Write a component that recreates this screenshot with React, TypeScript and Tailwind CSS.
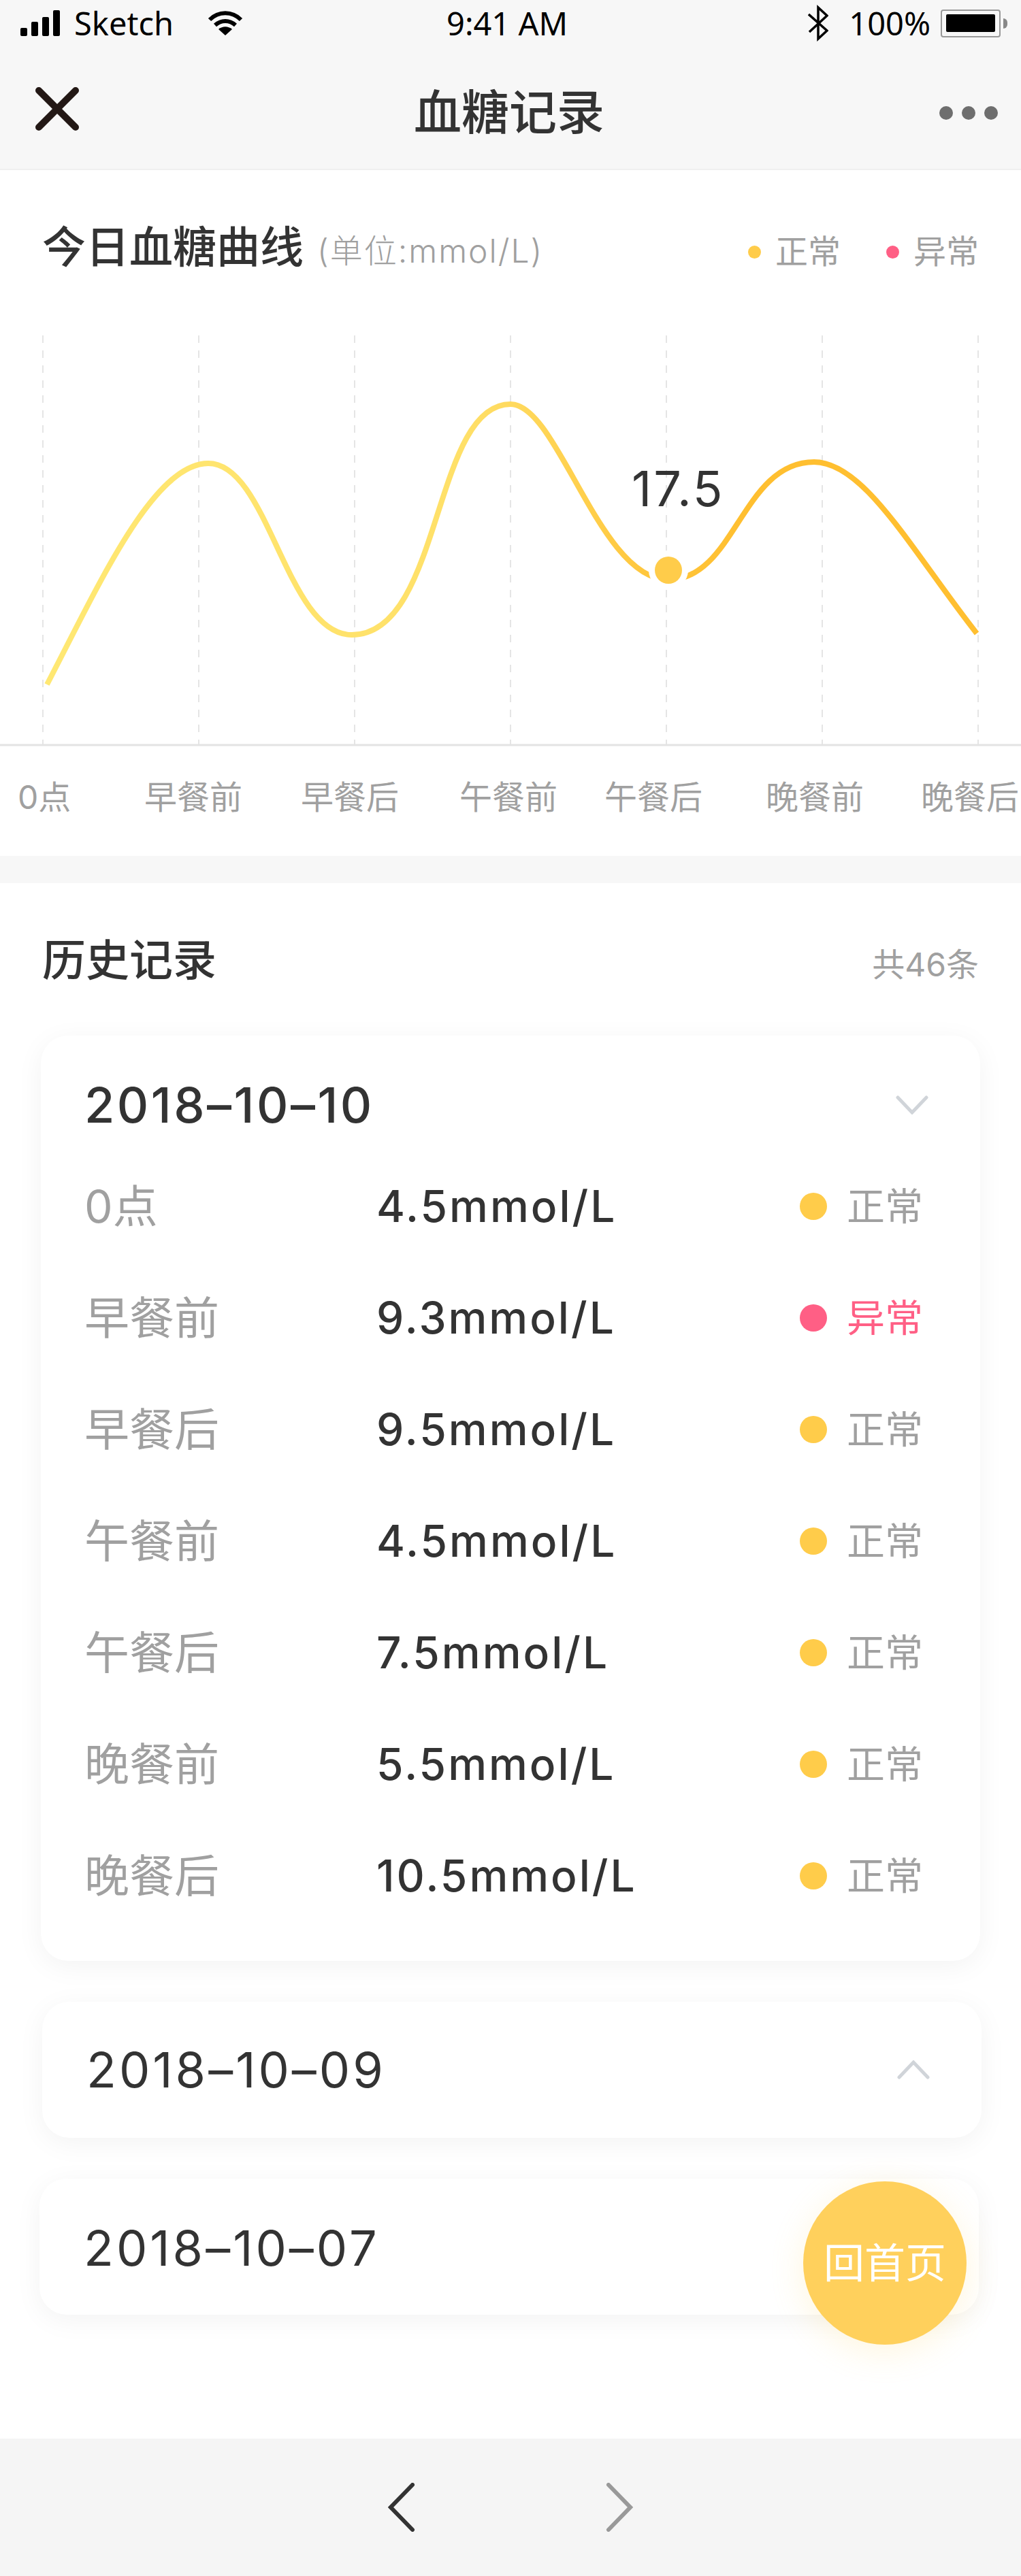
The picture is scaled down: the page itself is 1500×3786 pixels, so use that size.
import { FC } from "react";

const rows = [
  { name: "0点", value: "4.5mmol/L", ok: true },
  { name: "早餐前", value: "9.3mmol/L", ok: false },
  { name: "早餐后", value: "9.5mmol/L", ok: true },
  { name: "午餐前", value: "4.5mmol/L", ok: true },
  { name: "午餐后", value: "7.5mmol/L", ok: true },
  { name: "晚餐前", value: "5.5mmol/L", ok: true },
  { name: "晚餐后", value: "10.5mmol/L", ok: true },
];

const gridX = [63, 292, 521, 750, 979, 1208, 1437];

const StatusBar: FC = () => (
  <div className="relative flex h-[68px] items-center justify-between pl-[30px] pr-[20px] [font-family:'Noto_Sans',sans-serif] text-[47px] leading-none text-black">
    <div className="flex items-center">
      <div className="flex h-[38px] items-end gap-[6px]">
        <div className="h-[12px] w-[10px] rounded-[2px] bg-black" />
        <div className="h-[21px] w-[10px] rounded-[2px] bg-black" />
        <div className="h-[28px] w-[10px] rounded-[2px] bg-black" />
        <div className="h-[38px] w-[10px] rounded-[2px] bg-black" />
      </div>
      <span className="ml-[21px]">Sketch</span>
      <svg viewBox="0 0 52 36" className="ml-[50px] h-[36px] w-[52px]">
        <path d="M3 13 C16 0 36 0 49 13" fill="none" stroke="#000" strokeWidth="6" />
        <path d="M11 21 C20 13 32 13 41 21" fill="none" stroke="#000" strokeWidth="6" />
        <path d="M16 27 C22 22 30 22 36 27 L26 36 Z" fill="#000" />
      </svg>
    </div>
    <span className="absolute left-[656px]">9:41 AM</span>
    <div className="flex items-center">
      <svg viewBox="0 0 30 54" className="h-[54px] w-[30px]">
        <path d="M1 14 L28 38 L15 50 L15 4 L28 16 L2 40" fill="none" stroke="#000" strokeWidth="3.5" />
      </svg>
      <span className="ml-[30px]">100%</span>
      <div className="ml-[15px] flex h-[41px] w-[88px] items-center justify-center rounded-[4px] border-2 border-[#999]">
        <div className="h-[26px] w-[72px] rounded-[2px] bg-black" />
      </div>
      <div className="ml-[4px] h-[15px] w-[6px] rounded-r-full bg-[#888]" />
    </div>
  </div>
);

const NavBar: FC = () => (
  <div className="flex h-[182px] items-center justify-between border-b-2 border-[#efefef] pl-[52px] pr-[34px] pt-[16px]">
    <svg viewBox="0 0 64 64" className="-mt-[12px] h-[64px] w-[64px]">
      <path d="M5 5 L59 59 M59 5 L5 59" stroke="#231815" strokeWidth="10" strokeLinecap="round" />
    </svg>
    <span className="text-[70px] font-medium leading-none text-[#333]">血糖记录</span>
    <div className="flex gap-[13px]">
      <div className="h-[20px] w-[20px] rounded-full bg-[#6e6e6e]" />
      <div className="h-[20px] w-[20px] rounded-full bg-[#6e6e6e]" />
      <div className="h-[20px] w-[20px] rounded-full bg-[#6e6e6e]" />
    </div>
  </div>
);

const Chart: FC = () => (
  <svg viewBox="0 493 1500 604" className="block h-[604px] w-[1500px]">
    <defs>
      <linearGradient id="line" x1="69" y1="0" x2="1435" y2="0" gradientUnits="userSpaceOnUse">
        <stop offset="0" stopColor="#ffe873" />
        <stop offset="0.45" stopColor="#ffe068" />
        <stop offset="0.65" stopColor="#ffc63c" />
        <stop offset="0.75" stopColor="#ffbf30" />
        <stop offset="1" stopColor="#ffbf30" />
      </linearGradient>
    </defs>
    {gridX.map((x) => (
      <line key={x} x1={x} y1={493} x2={x} y2={1095} stroke="#e5e5e5" strokeWidth="2" strokeDasharray="11 11" />
    ))}
    <line x1={0} y1={1095} x2={1500} y2={1095} stroke="#e3e3e3" strokeWidth="3" />
    <path
      d="M69 1006 C145 860 225 681 306 681 C395 681 420 933 517 933 C650 933 635 594 750 594 C820 594 880 852 982 852 C1080 852 1090 679 1196 679 C1270 679 1340 810 1435 931"
      fill="none"
      stroke="url(#line)"
      strokeWidth="8"
    />
    <circle cx="982" cy="838" r="29" fill="#fff" />
    <circle cx="982" cy="838" r="20" fill="#ffcc4a" />
  </svg>
);

const chartLabels = [
  { text: "0点", cls: "ml-[26px] w-[76px]" },
  { text: "早餐前", cls: "ml-[110px] w-[142px]" },
  { text: "早餐后", cls: "ml-[88px] w-[142px]" },
  { text: "午餐前", cls: "ml-[91px] w-[142px]" },
  { text: "午餐后", cls: "ml-[71px] w-[142px]" },
  { text: "晚餐前", cls: "ml-[95px] w-[142px]" },
  { text: "晚餐后", cls: "ml-[86px] w-[142px]" },
];

const Row: FC<{ name: string; value: string; ok: boolean }> = ({ name, value, ok }) => (
  <div className="flex h-[164px] items-center pl-[64px]">
    <span className="w-[429px] text-[66px] leading-none text-[#a0a0a0]">{name}</span>
    <span className="w-[622px] text-[64px] font-medium leading-none tracking-[3px] text-[#333]">{value}</span>
    <div className={`h-[40px] w-[40px] rounded-full ${ok ? "bg-[#ffcc4a]" : "bg-[#ff5f85]"}`} />
    <span className={`ml-[29px] text-[56px] leading-none ${ok ? "text-[#a0a0a0]" : "text-[#ff5f85]"}`}>
      {ok ? "正常" : "异常"}
    </span>
  </div>
);

const Chevron: FC<{ up?: boolean }> = ({ up }) => (
  <svg viewBox="0 0 48 28" className="h-[28px] w-[48px]">
    <path
      d={up ? "M3 25 L24 3 L45 25" : "M3 3 L24 25 L45 3"}
      fill="none"
      stroke="#d0d4d9"
      strokeWidth="5"
      strokeLinecap="round"
    />
  </svg>
);

const App: FC = () => {
  return (
    <div className="relative flex h-[3786px] w-[1500px] flex-col overflow-hidden bg-white [font-family:'Inter','Noto_Sans_CJK_SC',sans-serif]">
      <div className="bg-[#f7f7f7]">
        <StatusBar />
        <NavBar />
      </div>

      {/* Chart section */}
      <div className="flex h-[243px] items-start justify-between pl-[62px] pr-[62px] pt-[82px]">
        <div className="flex items-end">
          <span className="text-[64px] font-medium leading-[62px] text-[#333]">今日血糖曲线</span>
          <span className="ml-[20px] translate-y-[3px] text-[48px] font-light leading-[56px] tracking-[2px] text-[#a0a0a0]">(单位:mmol/L)</span>
        </div>
        <div className="flex items-center pt-[10px] text-[48px] leading-[56px] text-[#a0a0a0]">
          <div className="h-[19px] w-[19px] rounded-full bg-[#ffcc4a]" />
          <span className="ml-[21px]">正常</span>
          <div className="ml-[67px] h-[19px] w-[19px] rounded-full bg-[#ff5f85]" />
          <span className="ml-[21px]">异常</span>
        </div>
      </div>
      <Chart />
      <div className="flex h-[161px] items-start pt-[47px]">
        {chartLabels.map((l) => (
          <span key={l.text} className={`${l.cls} shrink-0 whitespace-nowrap text-[48px] leading-[56px] text-[#a0a0a0]`}>
            {l.text}
          </span>
        ))}
      </div>
      <div className="h-[40px] bg-[#f7f7f7]" />

      {/* History */}
      <div className="flex-1">
        <div className="flex h-[224px] items-start justify-between pl-[62px] pr-[62px] pt-[80px]">
          <span className="text-[64px] font-medium leading-[66px] text-[#333]">历史记录</span>
          <span className="pt-[12px] text-[48px] leading-[56px] text-[#a0a0a0]">共46条</span>
        </div>

        <div className="ml-[60px] w-[1380px] rounded-[40px] bg-white pb-[43px] shadow-[0_8px_40px_rgba(0,0,0,0.05)]">
          <div className="flex h-[169px] items-center justify-between pl-[64px] pr-[76px] pt-[34px]">
            <span className="text-[72px] font-medium leading-none tracking-[3.5px] text-[#333]">2018–10–10</span>
            <Chevron />
          </div>
          {rows.map((r) => (
            <Row key={r.name} name={r.name} value={r.value} ok={r.ok} />
          ))}
        </div>

        <div className="ml-[62px] mt-[60px] flex h-[200px] w-[1380px] items-center justify-between rounded-[40px] bg-white pl-[65px] pr-[76px] shadow-[0_8px_40px_rgba(0,0,0,0.05)]">
          <span className="text-[72px] leading-none tracking-[4px] text-[#333]">2018–10–09</span>
          <Chevron up />
        </div>

        <div className="ml-[58px] mt-[60px] flex h-[200px] w-[1380px] items-center rounded-[40px] bg-white pl-[65px] pt-[3px] shadow-[0_8px_40px_rgba(0,0,0,0.05)]">
          <span className="text-[72px] leading-none tracking-[4px] text-[#333]">2018–10–07</span>
        </div>
      </div>

      {/* Bottom bar */}
      <div className="flex h-[202px] items-center justify-center gap-[280px] bg-[#f5f5f5]">
        <svg viewBox="0 0 40 72" className="h-[72px] w-[40px]">
          <path d="M36 3 L4 36 L36 69" fill="none" stroke="#333" strokeWidth="6" strokeLinecap="round" />
        </svg>
        <svg viewBox="0 0 40 72" className="h-[72px] w-[40px]">
          <path d="M4 3 L36 36 L4 69" fill="none" stroke="#999" strokeWidth="6" strokeLinecap="round" />
        </svg>
      </div>

      {/* Floating button */}
      <div className="absolute left-[1180px] top-[3206px] flex h-[240px] w-[240px] items-center justify-center rounded-full bg-[#ffd05c] text-[60px] leading-none text-white shadow-[0_10px_50px_rgba(255,208,92,0.2)]">
        回首页
      </div>

      {/* Chart value */}
      <span className="absolute left-[928px] top-[682px] text-[72px] leading-none tracking-[3px] text-[#333]">17.5</span>
    </div>
  );
};

export default App;
